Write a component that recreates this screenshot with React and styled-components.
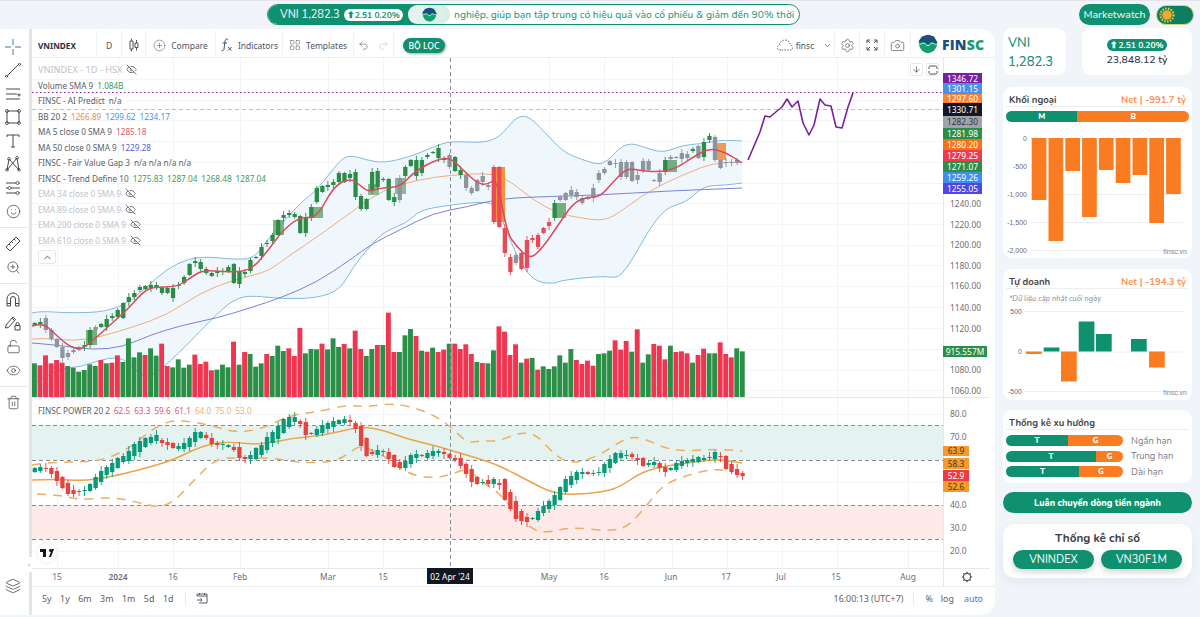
import React from "react";
import styled, { createGlobalStyle } from "styled-components";
import {
  ArrowDown, Camera, ChevronDown, ChevronUp, CirclePlus, Eye, EyeOff, Layers, LayoutGrid,
  LockOpen, Redo2, Settings, Smile, Trash2, Undo2, ZoomIn,
} from "lucide-react";

const GREEN = "#0f9170";
const ORANGE = "#f97b22";
const TV_FONT = `"Noto Sans", "DejaVu Sans", sans-serif`;
const SIDE_FONT = `"Nunito", "Lato", "Noto Sans", sans-serif`;

const GlobalStyle = createGlobalStyle`
  html, body { margin: 0; padding: 0; background: #f1f4f8; }
  body { font-family: ${TV_FONT}; overflow: hidden; }
  * { box-sizing: border-box; }
`;

const Page = styled.div`
  width: 1200px;
  height: 617px;
  display: flex;
  flex-direction: column;
  border-top: 1px solid #e4e6e9;
  background: #f1f4f8;
  overflow: hidden;
`;

/* header */
const Header = styled.header`
  height: 27px;
  flex: none;
  display: grid;
  grid-template-columns: 267px 533px 1fr;
  align-items: start;
  padding-top: 3px;
`;
const TickerPill = styled.div`
  grid-column: 2;
  height: 21px;
  display: flex;
  align-items: center;
  border: 1.5px solid ${GREEN};
  border-radius: 11px;
  background: #fff;
  overflow: hidden;
`;
const TickerHead = styled.div`
  height: 100%;
  width: 152px;
  flex: none;
  display: flex;
  align-items: center;
  gap: 4px;
  padding-left: 12px;
  background: ${GREEN};
  color: #eef;
  font: 500 11px ${SIDE_FONT};
  white-space: nowrap;
`;
const Change = styled.span`
  display: inline-flex;
  align-items: center;
  height: 12px;
  padding: 0 3px;
  border-radius: 6px;
  background: ${(p) => (p.$solid ? GREEN : "#fff")};
  color: ${(p) => (p.$solid ? "#fff" : GREEN)};
  font: 700 8.5px ${SIDE_FONT};
  white-space: nowrap;
`;
const LogoSlot = styled.div`
  width: 42px;
  height: 100%;
  flex: none;
  margin-left: -12px;
  display: flex;
  align-items: center;
  justify-content: center;
  background: linear-gradient(90deg, #e6f4ef, #d6eee6);
  border-radius: 9px;
`;
const Marquee = styled.div`
  padding-left: 4px;
  color: #2f9c85;
  font: 500 10.3px ${SIDE_FONT};
  white-space: nowrap;
`;
const HeaderRight = styled.div`
  grid-column: 3;
  display: flex;
  justify-content: flex-end;
  align-items: center;
  gap: 6px;
  padding-right: 6px;
`;
const Marketwatch = styled.div`
  width: 71px;
  height: 21px;
  display: flex;
  align-items: center;
  justify-content: center;
  border-radius: 11px;
  background: ${GREEN};
  color: #eaf5f1;
  font: 500 10.5px ${SIDE_FONT};
`;
const Toggle = styled.div`
  width: 38px;
  height: 20px;
  display: flex;
  align-items: center;
  padding-left: 2px;
  border: 1.5px solid #d8d27e;
  border-radius: 10px;
  background: #0c7f61;
`;

/* main row */
const Main = styled.main`
  flex: 1;
  min-height: 0;
  display: flex;
`;
const ChartCard = styled.section`
  position: relative;
  width: 995px;
  height: 586px;
  margin-top: 1px;
  flex: none;
  display: flex;
  background: #fff;
  border-radius: 0 14px 14px 0;
  overflow: hidden;
`;
const DrawBar = styled.aside`
  width: 32px;
  flex: none;
  display: flex;
  flex-direction: column;
  align-items: center;
  padding: 6px 3px 10px 0;
  border-right: 3px solid #e2e5ea;
  color: #3f4a52;
`;
const DrawIcon = styled.div`
  width: 29px;
  height: ${(p) => p.$h || 23.5}px;
  flex: none;
  display: flex;
  align-items: center;
  justify-content: center;
`;
const DrawSep = styled.div`
  width: 29px;
  height: 1px;
  flex: none;
  margin: ${(p) => p.$m || "4px 0"};
  background: #e6e8ec;
`;
const DrawGap = styled.div`
  flex: 1;
`;
const SideTab = styled.div`
  position: absolute;
  left: 26px;
  top: 528px;
  width: 6px;
  height: 15px;
  display: flex;
  align-items: center;
  justify-content: center;
  border-radius: 2px 0 0 2px;
  background: #fff;
  color: #a5a8af;
  font-size: 7px;
`;

const ChartCol = styled.div`
  flex: 1;
  min-width: 0;
  display: flex;
  flex-direction: column;
`;
const Toolbar = styled.div`
  height: 29px;
  flex: none;
  display: flex;
  align-items: stretch;
  border-bottom: 1px solid #eceef2;
  color: #50535e;
  font-size: 8.5px;
`;
const ToolCell = styled.div`
  width: ${(p) => p.$w}px;
  flex: none;
  display: flex;
  align-items: center;
  justify-content: ${(p) => (p.$center ? "center" : "flex-start")};
  gap: ${(p) => p.$gap || 5}px;
  padding-left: ${(p) => p.$pl || 0}px;
  padding-top: 4px;
  border-right: ${(p) => (p.$noline ? "none" : "1px solid #eff1f4")};
  margin: 2px 0;
  white-space: nowrap;
`;
const Symbol = styled.b`
  font-weight: 700;
  font-size: 8.2px;
  color: #2d3038;
`;
const ToolSpring = styled.div`
  flex: 1;
`;
const Filter = styled.div`
  width: 42px;
  height: 15px;
  display: flex;
  align-items: center;
  justify-content: center;
  border-radius: 8px;
  background: ${GREEN};
  color: #fff;
  font-size: 8.5px;
  font-weight: 500;
  box-shadow: 1px 1px 3px rgba(0, 0, 0, 0.35);
`;
const Brand = styled.div`
  width: 84px;
  flex: none;
  display: flex;
  align-items: center;
  gap: 4px;
  padding-left: 7px;
  padding-top: 2px;
  font: 800 14px "Open Sans", sans-serif;
  letter-spacing: 0.2px;
`;
const BrandA = styled.span`
  color: #1c4f7c;
`;
const BrandB = styled.span`
  color: #12a06f;
  margin-left: -4px;
`;

const Stage = styled.div`
  position: relative;
  height: 528px;
  flex: none;
`;
const Plot = styled.svg`
  display: block;
`;
const Legend = styled.div`
  position: absolute;
  left: 6px;
  top: 4px;
  display: flex;
  flex-direction: column;
  align-items: flex-start;
  font-size: 8.2px;
  color: #5b5e68;
`;
const LegendRow = styled.div`
  height: 15.5px;
  display: flex;
  align-items: center;
  gap: 4px;
  white-space: nowrap;
  color: ${(p) => (p.$muted ? "#bfc2c9" : "#5b5e68")};
  font-size: ${(p) => (p.$big ? 9.2 : 8.2)}px;
`;
const Val = styled.span`
  color: ${(p) => p.$c};
`;
const Collapse = styled.div`
  width: 18px;
  height: 14px;
  margin-top: 2px;
  display: flex;
  align-items: center;
  justify-content: center;
  border: 1px solid #e6e8ec;
  border-radius: 2px;
  background: #fff;
  color: #50535e;
`;
const PaneLegend = styled.div`
  position: absolute;
  left: 6px;
  top: 345px;
  height: 14px;
  display: flex;
  align-items: center;
  gap: 4px;
  font-size: 8.2px;
  color: #5b5e68;
`;
const PaneButtons = styled.div`
  position: absolute;
  left: 878px;
  top: 5px;
  display: flex;
  gap: 3px;
`;
const PaneButton = styled.div`
  width: 13px;
  height: 13px;
  display: flex;
  align-items: center;
  justify-content: center;
  border: 1px solid #e6e8ec;
  border-radius: 2px;
  background: #fff;
  color: #50535e;
`;
const TvMark = styled.div`
  position: absolute;
  left: 4px;
  top: 484px;
  width: 22px;
  height: 22px;
  display: flex;
  align-items: center;
  justify-content: center;
  border-radius: 50%;
  border: 1px solid #eef0f3;
  background: #fff;
`;
const BottomBar = styled.div`
  flex: 1;
  display: flex;
  align-items: center;
  border-top: 1px solid #eceef2;
  color: #5b5e68;
  font-size: 8.9px;
  padding: 0 12px 6px 10px;
`;
const Range = styled.span`
  margin-right: 8.5px;
  &:nth-child(7) { margin-right: 0; }
`;
const BarSep = styled.div`
  width: 1px;
  height: 13px;
  margin: ${(p) => p.$m};
  background: #e6e8ec;
`;
const Auto = styled.span`
  margin-left: ${(p) => p.$ml || 0}px;
  color: ${(p) => p.$c || "#5b5e68"};
`;

/* side column */
const Side = styled.aside`
  width: 189px;
  margin-left: 8px;
  flex: none;
  display: flex;
  flex-direction: column;
  font-family: ${SIDE_FONT};
`;
const StatRow = styled.div`
  display: flex;
  gap: 16px;
  height: 47px;
`;
const Card = styled.div`
  background: #fff;
  border-radius: ${(p) => p.$r || 9}px;
  margin-top: ${(p) => p.$top || 0}px;
  height: ${(p) => p.$h}px;
  flex: none;
`;
const StatCard = styled(Card)`
  width: ${(p) => p.$w}px;
  display: flex;
  flex-direction: column;
  justify-content: center;
  align-items: ${(p) => (p.$center ? "center" : "flex-start")};
  gap: ${(p) => p.$gap}px;
  padding-left: ${(p) => (p.$center ? 0 : 5)}px;
  padding-top: ${(p) => (p.$center ? 3 : 2)}px;
`;
const VniText = styled.div`
  color: #159178;
  font-size: 13px;
  font-weight: 500;
  line-height: 16px;
`;
const Turnover = styled.div`
  color: #34363d;
  font-size: 10.5px;
  font-weight: 500;
  line-height: 14px;
`;
const CardHead = styled.div`
  height: 20px;
  margin: 0 3px;
  padding: 5px 3px 0;
  display: flex;
  align-items: center;
  justify-content: space-between;
  border-bottom: 1px solid #eceef1;
  font-size: 9.6px;
  font-weight: 700;
  color: #43454e;
`;
const Net = styled.span`
  color: #f6965a;
  font-weight: 700;
`;
const Split = styled.div`
  height: 11px;
  width: ${(p) => p.$w}px;
  margin: ${(p) => p.$mt || 0}px 0 0 3px;
  flex: none;
  display: flex;
  border-radius: 6px;
  overflow: hidden;
  color: #fff;
  font-size: 8px;
  font-weight: 800;
`;
const SplitPart = styled.div`
  display: flex;
  align-items: center;
  justify-content: center;
  background: ${(p) => (p.$orange ? ORANGE : GREEN)};
`;
const SubNote = styled.div`
  height: 17px;
  padding: 4px 0 0 6px;
  color: #8a8d96;
  font-size: 7.5px;
  font-style: italic;
  line-height: 11px;
`;
const BarChart = styled.svg`
  display: block;
  margin-top: ${(p) => p.$mt || 0}px;
`;
const TrendRow = styled.div`
  height: 15.5px;
  display: flex;
  align-items: center;
  gap: 8px;
  color: #7a7c84;
  font-size: 9.4px;
`;
const TrendList = styled.div`
  padding-top: 3px;
  display: flex;
  flex-direction: column;
`;
const WideButton = styled.div`
  height: 21px;
  margin-top: 9px;
  flex: none;
  display: flex;
  align-items: center;
  justify-content: center;
  border-radius: 11px;
  background: ${GREEN};
  color: #fff;
  font-size: 9.1px;
  font-weight: 800;
`;
const IndexCard = styled(Card)`
  display: flex;
  flex-direction: column;
  align-items: center;
  padding-top: 7px;
  box-shadow: 0 4px 12px rgba(40, 50, 70, 0.06);
`;
const IndexTitle = styled.div`
  color: #3a3c48;
  font-size: 11.7px;
  font-weight: 700;
  line-height: 15px;
`;
const IndexButtons = styled.div`
  margin-top: 4px;
  display: flex;
  gap: 7px;
`;
const IndexButton = styled.div`
  width: 81px;
  height: 19px;
  display: flex;
  align-items: center;
  justify-content: center;
  border-radius: 10px;
  background: ${GREEN};
  color: #eaf5f1;
  font-size: 11px;
  font-weight: 500;
  box-shadow: 0 3px 6px rgba(0, 0, 0, 0.18);
`;

/* chart data, in page pixels */
const VOL = `g340 r346 r316 r340 r330 r338 g348 g353 g365 g360 g343 g348 r330 g340 r338 r316 g336 g265 g322 g307 r315 g295 g317 r281 r348 g352 g328 g353 g344 r314 r342 r335 r361 g359 g344 g352 r275 g344 r306 g312 g350 g340 r312 g318 g287 g303 r295 r318 r234 g310 g297 g298 r281 g298 g265 g291 r282 g295 r242 r297 g318 g297 r285 g285 r188 r306 g306 g256 g237 r258 g302 r305 g293 r306 r299 g281 r281 r297 r283 r312 g336 r339 g340 g301 r229 r245 r315 r283 g338 r326 g324 r359 g349 g357 g349 g316 g338 g297 r330 r342 r332 r347 g312 g310 g302 r271 r299 r273 g305 r238 g338 g313 r282 r287 r328 g287 r306 r304 r310 g338 r315 r296 g310 g310 r277 r312 r322 g295 g304`.split(" ");

const CANDLES = `g323,325 g322,324 a318,330 a330,339 a339,347 a347,358 a353,357 a350,352 a347,350 g345,347 g330,345 a327,330 g324,327 g319,327 g316,318 g310,317 g303,318 g297,302 g293,297 g287,290 g286,289 g285,288 g285,287 g288,293 g288,293 g288,298 g285,286 g277,283 g264,275 g261,263 g262,269 g269,273 g273,276 g271,273 g271,272 g267,271 g264,283 g271,284 g272,274 g260,271 g257,258 g247,256 g243,244 g235,241 g220,235 g215,218 g213,215 g214,217 g216,233 g217,233 g207,218 g188,202 g186,192 g185,187 g182,185 g173,182 g173,182 g174,178 g172,197 g196,209 g199,209 g172,190 g171,187 g179,180 g179,200 g197,202 a178,200 g167,176 g160,166 g160,176 g160,173 g155,157 g152,153 g148,158 g159,160 a155,167 g157,171 g170,175 a175,188 a188,193 a180,191 a176,182 a185,187 r167,222 r167,227 r228,253 r257,272 a255,263 r253,269 r240,268 r238,240 r235,247 r228,233 r222,226 g203,218 a197,200 a193,200 a190,195 a192,197 a198,203 a197,199 a188,198 a173,180 a169,173 a161,165 a163,164 a162,177 a162,177 a162,181 a175,180 a161,170 a161,170 a180,181 a173,182 g160,172 a157,159 a157,158 a153,159 a154,158 g149,151 a146,158 g142,157 g136,140 a137,160 a160,168 a162,163 a162,163 a160,163`.split(" ");

const POWER = `g468,472 g467,471 r468,469 r468,474 r471,481 r477,488 r483,494 r490,494 r491,492 g490,491 g484,491 g477,488 g471,482 g467,475 g463,472 g458,468 g456,462 g451,461 g444,456 g441,452 g438,447 g437,443 g435,441 r440,443 r442,445 r443,448 g446,449 g443,449 g438,447 g432,442 g432,438 r435,438 r438,444 r443,445 g444,445 g445,447 r447,450 r447,458 r457,459 g455,459 g448,459 g445,455 g437,450 g432,443 g426,439 g419,433 g417,427 g417,422 r421,424 r422,435 r433,434 g429,435 g425,433 g423,429 g421,427 g420,424 g419,423 r420,422 r423,429 r426,446 r438,456 r452,454 g450,455 g451,452 r452,459 r455,467 r462,468 g461,468 g455,464 g454,458 r455,456 g453,458 g451,456 g451,453 r452,454 r454,458 r458,460 r458,466 r464,474 r469,482 r477,484 g482,483 r480,484 g479,484 r483,485 r479,500 r492,509 r501,519 r511,521 r517,522 g518,519 g511,520 g506,513 g501,509 g495,505 g487,500 g479,492 g476,485 g472,480 g472,474 r472,474 g473,474 g472,473 g464,473 g459,468 g453,463 g453,458 g455,456 r454,457 r458,460 r458,466 g463,465 g462,465 r463,468 r467,472 g468,470 g463,470 g461,466 g460,463 g459,462 g457,462 g458,460 g457,458 g452,459 r456,457 r456,469 r464,472 r469,475 r473,476`.split(" ");

const MA5 = [[32,326],[43,323],[53,332],[67,345],[80,350],[90,343],[110,325],[127,310],[143,292],[153,287],[177,287],[190,278],[203,270],[227,272],[250,271],[267,252],[283,230],[300,217],[317,218],[333,187],[350,178],[360,185],[368,192],[380,188],[400,187],[413,173],[433,161],[450,157],[463,170],[477,183],[487,185],[497,178],[507,233],[517,247],[527,256],[533,257],[543,247],[557,227],[573,203],[587,197],[600,197],[613,182],[627,168],[643,171],[660,172],[677,168],[693,157],[710,148],[727,153],[742,163]];
const BB_UP = [[32,313],[40,311],[67,313],[107,312],[133,300],[157,277],[177,263],[200,256],[240,260],[255,257],[267,240],[300,203],[317,190],[340,160],[350,155],[367,160],[383,163],[410,157],[433,147],[450,141],[483,143],[500,137],[515,118],[527,115],[543,130],[563,152],[583,160],[603,166],[620,147],[632,143],[643,147],[663,153],[683,145],[700,144],[720,140],[742,141]];
const BB_LOW = [[32,385],[48,375],[63,368],[80,367],[100,360],[117,357],[128,362],[140,375],[150,377],[167,365],[213,318],[230,302],[247,295],[283,299],[317,298],[340,290],[353,267],[367,250],[383,232],[407,223],[420,210],[450,205],[477,202],[495,203],[505,227],[517,257],[533,281],[553,284],[563,280],[603,276],[615,278],[622,274],[632,260],[647,233],[665,208],[687,202],[703,186],[727,185],[742,183]];
const BB_MID = [[32,339],[43,338],[73,341],[100,337],[133,327],[167,315],[200,293],[233,280],[267,272],[283,260],[317,237],[350,213],[383,190],[417,180],[450,175],[493,173],[513,183],[533,200],[557,213],[580,218],[605,221],[623,210],[643,195],[667,182],[690,172],[713,163],[742,162]];
const MA50 = [[32,343],[57,345],[93,350],[123,347],[150,335],[183,325],[217,318],[250,308],[283,297],[317,282],[350,260],[373,243],[400,230],[433,213],[467,207],[497,199],[533,197],[600,195],[667,191],[742,188]];
const PREDICT = [[748,160],[760,132],[765,116],[770,117],[777,111],[782,107],[787,99],[792,107],[798,101],[803,123],[809,135],[814,125],[820,99],[825,105],[831,106],[836,127],[842,128],[848,107],[853,93]];
const P_MID = [[32,480],[57,479],[83,481],[110,477],[143,469],[173,460],[193,450],[213,443],[233,442],[260,445],[293,438],[320,436],[350,429],[363,427],[383,430],[407,439],[433,445],[460,453],[483,460],[500,466],[527,480],[550,492],[570,495],[603,492],[620,487],[640,473],[660,467],[687,463],[717,459],[742,463]];
const P_UP = [[32,465],[43,463],[73,462],[100,461],[127,450],[147,433],[167,421],[187,421],[210,425],[233,432],[260,430],[290,415],[317,412],[347,405],[367,407],[393,403],[423,410],[447,423],[467,443],[480,441],[500,441],[520,432],[537,435],[550,450],[565,462],[580,462],[600,455],[627,437],[643,438],[667,449],[687,451],[717,449],[742,451]];
const P_LOW = [[37,494],[60,495],[80,500],[113,497],[140,503],[157,507],[173,503],[197,477],[217,458],[240,458],[273,458],[300,463],[333,462],[350,453],[360,445],[383,455],[410,475],[433,478],[450,475],[467,468],[483,483],[500,493],[523,523],[543,534],[570,527],[607,531],[627,528],[647,505],[663,485],[687,475],[713,469],[730,471]];

const smooth = (pts) => {
  let d = `M${pts[0][0]} ${pts[0][1]}`;
  for (let i = 1; i < pts.length - 1; i++) {
    const mx = (pts[i][0] + pts[i + 1][0]) / 2;
    const my = (pts[i][1] + pts[i + 1][1]) / 2;
    d += ` Q${pts[i][0]} ${pts[i][1]} ${mx} ${my}`;
  }
  const last = pts[pts.length - 1];
  return `${d} L${last[0]} ${last[1]}`;
};
const line = (pts) => pts.map((p) => p.join(",")).join(" ");
const candleX = (i) => 34.75 + 5.53 * i;

const PRICE_TAGS = [
  ["1346.72", 73, 11, "#7b1fa2"], ["1301.15", 83, 11, "#4a92e6"], ["1297.60", 94, 10, "#f58533"],
  ["1330.71", 103, 13, "#131722"], ["1282.30", 116, 12, "#a0a3aa", "#34363d"], ["1281.98", 128, 11, "#2b8f47"],
  ["1280.20", 139, 11, "#f97316"], ["1279.25", 150, 11, "#ef3a50"], ["1271.07", 161, 11, "#2b8f47"],
  ["1259.26", 172, 11, "#3b8fef"], ["1255.05", 183, 11, "#4f46e5"],
];
const PRICE_TICKS = [[1240, 203.5], [1220, 224.5], [1200, 245], [1180, 265.5], [1160, 286], [1140, 307.5], [1120, 328.5], [1080, 370], [1060, 390.5]];
const POWER_TICKS = [["80.0", 414], ["70.0", 436.5], ["40.0", 505], ["30.0", 528], ["20.0", 551]];
const POWER_TAGS = [["63.9", 446, 10, "#f59a2c", "#4a3a1a"], ["58.3", 458, 11, "#f59a2c", "#4a3a1a"], ["52.9", 470, 11, "#ef3a41", "#fff"], ["52.6", 481, 11, "#f59a2c", "#4a3a1a"]];
const V_GRID = [57, 118, 173, 240, 328, 383, 549, 604, 672, 727, 782, 837, 908];
const H_GRID = [79, 100, 120, 141, 162, 183, 203, 224, 245, 265, 286, 307, 328, 349, 370, 390];
const TIME_TICKS = [["15", 57], ["2024", 118, 600], ["16", 173], ["Feb", 240], ["Mar", 328], ["15", 383], ["May", 549], ["16", 604], ["Jun", 671], ["17", 726], ["Jul", 781], ["15", 836], ["Aug", 908]];

const Candles = ({ data, palette, wick }) =>
  data.map((c, i) => {
    const [top, bottom] = c.slice(1).split(",").map(Number);
    const x = candleX(i);
    const fill = palette[c[0]];
    const up = 1 + (i * 7) % wick;
    const down = 1 + (i * 11) % wick;
    return (
      <g key={i} fill={fill}>
        <rect x={x - 0.4} y={top - up} width="0.9" height={bottom - top + up + down} />
        <rect x={x - 2.1} y={top} width="4.3" height={Math.max(bottom - top, 1)} />
      </g>
    );
  });

const ChartPlot = () => (
  <Plot width="963" height="528" viewBox="32 58 963 528" fontFamily={TV_FONT}>
    {V_GRID.map((x) => <line key={x} x1={x + 0.5} x2={x + 0.5} y1="58" y2="568" stroke="#f2f4f8" />)}
    {H_GRID.map((y) => <line key={y} x1="32" x2="943" y1={y + 0.5} y2={y + 0.5} stroke="#f2f4f8" />)}
    {[414, 436, 482, 528, 551].map((y) => <line key={y} x1="32" x2="943" y1={y + 0.5} y2={y + 0.5} stroke="#f2f4f8" />)}

    {/* main pane */}
    <path d={`${smooth(BB_UP)} L742 183 ${smooth([...BB_LOW].reverse()).replace("M", "L")} Z`} fill="#eff7fc" />
    <path d={smooth(BB_UP)} fill="none" stroke="#86b8de" strokeWidth="1" />
    <path d={smooth(BB_LOW)} fill="none" stroke="#86b8de" strokeWidth="1" />
    <path d={smooth(BB_MID)} fill="none" stroke="#f3ab7c" strokeWidth="1" />
    <path d={smooth(MA50)} fill="none" stroke="#7c7fd6" strokeWidth="1" />
    <line x1="32" x2="943" y1="92.5" y2="92.5" stroke="#7b1fa2" strokeWidth="1.2" strokeDasharray="1.5 2.5" />
    <line x1="32" x2="943" y1="109.5" y2="109.5" stroke="#bdbfc6" strokeDasharray="4 3" />

    <rect x="86" y="330" width="11" height="15" fill="#5ea368" opacity="0.85" />
    <rect x="273" y="220" width="11" height="15" fill="#5ea368" opacity="0.8" />
    <rect x="312" y="207" width="11" height="11" fill="#5ea368" opacity="0.8" />
    <rect x="368" y="184" width="11" height="11" fill="#5ea368" opacity="0.7" />
    <rect x="395" y="178" width="11" height="16" fill="#5ea368" opacity="0.7" />
    <rect x="494" y="167" width="11" height="55" fill="#f5913c" />
    <rect x="555" y="203" width="11" height="15" fill="#5ea368" opacity="0.85" />
    <rect x="666" y="160" width="11" height="12" fill="#5ea368" opacity="0.85" />
    <rect x="715" y="143" width="11" height="17" fill="#f19a55" />
    <Candles data={CANDLES} palette={{ g: "#2b8d45", r: "#e94b55", a: "#8f959f" }} wick={4} />
    <path d={smooth(MA5)} fill="none" stroke="#db4a5c" strokeWidth="1.5" />
    <polyline points={line(PREDICT)} fill="none" stroke="#7b1fa2" strokeWidth="1.6" strokeLinejoin="round" />

    {/* volume */}
    {VOL.map((v, i) => {
      const top = 250 + Number(v.slice(1)) / 3;
      return <rect key={i} x={32 + 5.53 * i} y={top} width="4.9" height={397 - top} fill={v[0] === "g" ? "#2b8f47" : "#ef3550"} />;
    })}
    <line x1="32" x2="990" y1="397.5" y2="397.5" stroke="#e6e8ec" />

    {/* power pane */}
    <rect x="32" y="425" width="911" height="35" fill="#e5f3f0" />
    <rect x="32" y="505" width="911" height="34" fill="#fde9e8" />
    {[425, 460, 505, 539].map((y) => <line key={y} x1="32" x2="943" y1={y + 0.5} y2={y + 0.5} stroke="#8b8d95" strokeDasharray="4 3" />)}
    <path d={smooth(P_UP)} fill="none" stroke="#eeae62" strokeWidth="1.5" strokeDasharray="9 7" />
    <path d={smooth(P_LOW)} fill="none" stroke="#eeae62" strokeWidth="1.5" strokeDasharray="9 7" />
    <path d={smooth(P_MID)} fill="none" stroke="#eba449" strokeWidth="1.5" />
    <Candles data={POWER} palette={{ g: "#089a78", r: "#e8423e" }} wick={5} />

    <line x1="450.5" x2="450.5" y1="58" y2="568" stroke="#8b8d95" strokeDasharray="4 3" />

    {/* axes */}
    <line x1="943.5" x2="943.5" y1="58" y2="586" stroke="#e6e8ec" />
    <line x1="32" x2="990" y1="568.5" y2="568.5" stroke="#e6e8ec" />
    <g fontSize="8.4" fill="#6a6d76">
      {PRICE_TICKS.map(([t, y]) => <text key={t} x="950" y={y + 3}>{t}.00</text>)}
      {POWER_TICKS.map(([t, y]) => <text key={t} x="950" y={y + 3}>{t}</text>)}
      {TIME_TICKS.map(([t, x, w], i) => <text key={i} x={x} y="580" textAnchor="middle" fontWeight={w || 400}>{t}</text>)}
    </g>
    <g fontSize="8.4" textAnchor="middle">
      {PRICE_TAGS.map(([t, y, h, bg, fg]) => (
        <g key={t}>
          <rect x="943" y={y} width="39" height={h} fill={bg} />
          <text x="962.5" y={y + h / 2 + 3} fill={fg || "#fff"}>{t}</text>
        </g>
      ))}
      <rect x="943" y="346" width="44" height="11" fill="#2b8f47" />
      <text x="965" y="354.5" fill="#fff">915.557M</text>
      {POWER_TAGS.map(([t, y, h, bg, fg]) => (
        <g key={t}>
          <rect x="943" y={y} width="26" height={h} fill={bg} />
          <text x="956" y={y + h / 2 + 3} fill={fg}>{t}</text>
        </g>
      ))}
      <rect x="427" y="568" width="46" height="16" fill="#131722" />
      <text x="450" y="579.5" fill="#fff">02 Apr '24</text>
    </g>
    <g transform="translate(961 571)" stroke="#50535e" fill="none">
      <circle cx="6" cy="6" r="3.6" strokeWidth="1.2" />
      <path d="M6 .8v1.6M6 9.6v1.6M.8 6h1.6M9.6 6h1.6M2.3 2.3l1.1 1.1M8.6 8.6l1.1 1.1M9.7 2.3L8.6 3.4M3.4 8.6L2.3 9.7" strokeWidth="1.2" />
    </g>
  </Plot>
);

const ChartLegend = () => (
  <Legend>
    <LegendRow $muted $big>VNINDEX - 1D - HSX <EyeOff size={11} color="#6a6d76" /></LegendRow>
    <LegendRow>Volume SMA 9 <Val $c="#3f9a58">1.084B</Val></LegendRow>
    <LegendRow>FINSC - AI Predict <Val $c="#5b5e68">n/a</Val></LegendRow>
    <LegendRow>BB 20 2 <Val $c="#ef8a50">1266.89</Val><Val $c="#4a92e6">1299.62</Val><Val $c="#4a92e6">1234.17</Val></LegendRow>
    <LegendRow>MA 5 close 0 SMA 9 <Val $c="#e0576a">1285.18</Val></LegendRow>
    <LegendRow>MA 50 close 0 SMA 9 <Val $c="#5a5fcf">1229.28</Val></LegendRow>
    <LegendRow>FINSC - Fair Value Gap 3 <Val $c="#5b5e68">n/a n/a n/a n/a</Val></LegendRow>
    <LegendRow>FINSC - Trend Define 10 <Val $c="#3f9a58">1275.83</Val><Val $c="#3f9a58">1287.04</Val><Val $c="#3f9a58">1268.48</Val><Val $c="#3f9a58">1287.04</Val></LegendRow>
    {["EMA 34", "EMA 89", "EMA 200", "EMA 610"].map((n) => (
      <LegendRow $muted key={n}>{n} close 0 SMA 9 <EyeOff size={11} color="#6a6d76" /></LegendRow>
    ))}
    <Collapse><ChevronUp size={11} /></Collapse>
  </Legend>
);

const Tool = ({ d, children }) => (
  <DrawIcon>
    {children || (
      <svg width="18" height="18" viewBox="0 0 18 18" fill="none" stroke="currentColor" strokeWidth="1">
        <path d={d} />
      </svg>
    )}
  </DrawIcon>
);

const DrawTools = () => (
  <DrawBar>
    <DrawIcon>
      <svg width="18" height="18" viewBox="0 0 18 18" fill="none" stroke="#4b78a0" strokeWidth="1">
        <path d="M1 9h6M11 9h6M9 1v6M9 11v6" />
      </svg>
    </DrawIcon>
    <Tool d="M3 15L15 3M15.5 2.500a1 1 0 1 0 .01 0M2.500 14.500a1 1 0 1 0 .01 0" />
    <Tool d="M2 4h14M2 9h11M2 14h14M15 9a1 1 0 1 0 .01 0" />
    <Tool d="M3 3h12v12H3zM3 1.500a1.500 1.500 0 1 0 .01 0M15 1.500a1.500 1.500 0 1 0 .01 0M3 13.500a1.500 1.500 0 1 0 .01 0M15 13.500a1.500 1.500 0 1 0 .01 0" />
    <Tool d="M3 5V3h12v2M9 3v12M7 15h4" />
    <Tool d="M3 15L5 4l10 11L13 3 3 15M5 2.500a1.300 1.300 0 1 0 .01 0M13 1.500a1.300 1.300 0 1 0 .01 0M3 13.500a1.300 1.300 0 1 0 .01 0M15 13.500a1.300 1.300 0 1 0 .01 0" />
    <Tool d="M2 4h10M15 4h1M2 9h2M7 9h9M2 14h10M15 14h1M13.500 2.500a1.500 1.500 0 1 0 .01 0M5.500 7.500a1.500 1.500 0 1 0 .01 0M13.500 12.500a1.500 1.500 0 1 0 .01 0" />
    <DrawIcon><Smile size={15} strokeWidth={1.2} /></DrawIcon>
    <DrawSep />
    <Tool d="M2 12L12 2l4 4L6 16zM5 9l1.500 1.500M7.500 6.500L9 8M10 4l1.500 1.500" />
    <DrawIcon><ZoomIn size={15} strokeWidth={1.2} /></DrawIcon>
    <DrawSep />
    <Tool d="M3 15V8a6 6 0 0 1 12 0v7h-3.500V8a2.500 2.500 0 0 0-5 0v7zM3 12.500h3.500M11.500 12.500H15" />
    <Tool d="M2 11L9 3l2.500 2.500-7 8L1.500 14zM8 4l2.500 2.500M11 11.500h5V16h-5zM12 11.500V10a1.500 1.500 0 0 1 3 0v1.500" />
    <DrawIcon><LockOpen size={15} strokeWidth={1.2} /></DrawIcon>
    <DrawIcon><Eye size={15} strokeWidth={1.2} /></DrawIcon>
    <DrawSep />
    <DrawIcon><Trash2 size={15} strokeWidth={1.2} /></DrawIcon>
    <DrawGap />
    <DrawIcon $h={38}><Layers size={16} strokeWidth={1.2} /></DrawIcon>
  </DrawBar>
);

const CandleIcon = () => (
  <svg width="10" height="14" viewBox="0 0 10 14" fill="none" stroke="currentColor" strokeWidth="1">
    <path d="M2.500 0.500v2M2.500 11v2.500M7.500 2v3M7.500 9.500v3M1 3h3v8H1zM6 5h3v4.500H6z" />
  </svg>
);
const FxIcon = () => (
  <svg width="13" height="14" viewBox="0 0 13 14" fill="none" stroke="currentColor" strokeWidth="1">
    <path d="M8 1.200c-2-.6-2.800.6-3 2L4 11c-.3 1.500-1 2-2.500 1.600M2.500 5H7M8 9l3.500 3.500M11.500 9L8 12.500" />
  </svg>
);
const FullscreenIcon = () => (
  <svg width="12" height="12" viewBox="0 0 12 12" fill="none" stroke="currentColor" strokeWidth="1">
    <path d="M1 4V1h3M1 1l3 3M8 1h3v3M11 1L8 4M1 8v3h3M1 11l3-3M11 8v3H8M11 11L8 8" />
  </svg>
);
const CloudIcon = () => (
  <svg width="16" height="12" viewBox="0 0 16 12" fill="none" stroke="#6a6d76" strokeWidth="1" strokeDasharray="1.600 1.200">
    <path d="M4 11H3a2.500 2.500 0 0 1-.5-5C3 3 5 1 8 1s5 2 5.500 5a2.500 2.500 0 0 1-.5 5z" />
  </svg>
);
const FinscMark = ({ size }) => (
  <svg width={size} height={size} viewBox="0 0 24 24">
    <path d="M12 1l7 2 4 7c.4 6-4 13-11 13S.6 16 1 10l4-7z" fill="#12a06f" />
    <path d="M5 3l7-2 7 2 4 7-1 2c-2.400 1-3.500-2.500-6-2.500s-2.500 3-4 3-2.500-3-5-3-4 1.500-5.500.5l-.5-2z" fill="#1c4f7c" />
    <path d="M1.500 12c2 1 3.500-1 5.500-1s2.500 3 5 3 3-3 5-3 3 2 5.500 1" stroke="#fff" strokeWidth="1" fill="none" />
  </svg>
);

const ChartTools = () => (
  <Toolbar>
    <ToolCell $w={65} $pl={6}><Symbol>VNINDEX</Symbol></ToolCell>
    <ToolCell $w={25} $center>D</ToolCell>
    <ToolCell $w={24} $center><CandleIcon /></ToolCell>
    <ToolCell $w={70} $center><CirclePlus size={13} strokeWidth={1} />Compare</ToolCell>
    <ToolCell $w={67} $center><FxIcon />Indicators</ToolCell>
    <ToolCell $w={71} $center><LayoutGrid size={12} strokeWidth={1} />Templates</ToolCell>
    <ToolCell $w={40} $center $gap={9}>
      <Undo2 size={11} strokeWidth={1.2} />
      <Redo2 size={11} strokeWidth={1.2} color="#c4c7cd" />
    </ToolCell>
    <ToolCell $w={60} $center $noline><Filter>BỘ LỌC</Filter></ToolCell>
    <ToolSpring />
    <ToolCell $w={60} $center $gap={3}>
      <CloudIcon />finsc<ChevronDown size={9} style={{ marginLeft: 6 }} />
    </ToolCell>
    <ToolCell $w={25} $center><Settings size={15} strokeWidth={1.1} /></ToolCell>
    <ToolCell $w={25} $center><FullscreenIcon /></ToolCell>
    <ToolCell $w={26} $center><Camera size={15} strokeWidth={1.1} /></ToolCell>
    <Brand>
      <FinscMark size={20} />
      <BrandA>FIN</BrandA><BrandB>SC</BrandB>
    </Brand>
  </Toolbar>
);

const BAR_TOP = 138;
const FOREIGN = [200, 241, 171, 217, 170, 183, 175, 223, 194];
const ForeignChart = () => (
  <BarChart $mt={7} width="189" height="129" viewBox="0 0 189 129" fontFamily="Liberation Sans, Arial, sans-serif">
    {[0, 28, 56, 84, 112].map((y) => <line key={y} x1="28" x2="180" y1={y + 9.5} y2={y + 9.5} stroke="#eceef1" />)}
    {["0", "-500", "-1,000", "-1,500", "-2,000"].map((t, i) => (
      <text key={t} x="24" y={12 + i * 28} textAnchor="end" fontSize="7" fill="#6a6d76">{t}</text>
    ))}
    {FOREIGN.map((b, i) => <rect key={i} x={28.700 + 16.800 * i} y="9" width="14.700" height={b - BAR_TOP} fill={ORANGE} />)}
    <text x="184" y="125" textAnchor="end" fontSize="7" fill="#85878f">finsc.vn</text>
  </BarChart>
);
const DEALER = [[23, 351, 353.5, ORANGE], [40.700, 347, 351, GREEN], [58, 351, 381, ORANGE], [75.700, 321, 351, GREEN], [93, 333.500, 351, GREEN], [128, 338.500, 351, GREEN], [146, 351, 367, ORANGE]];
const DealerChart = () => (
  <BarChart width="189" height="93" viewBox="0 0 189 93" fontFamily="Liberation Sans, Arial, sans-serif">
    {[5, 45.500, 85].map((y) => <line key={y} x1="22" x2="180" y1={y + 0.5} y2={y + 0.5} stroke="#eceef1" />)}
    {[["500", 8], ["0", 48], ["-500", 88]].map(([t, y]) => (
      <text key={t} x="19" y={y} textAnchor="end" fontSize="7" fill="#6a6d76">{t}</text>
    ))}
    {DEALER.map(([x, a, b, c], i) => <rect key={i} x={x} y={a - 305.500} width="15.700" height={b - a} fill={c} />)}
    <text x="184" y="89" textAnchor="end" fontSize="7" fill="#85878f">finsc.vn</text>
  </BarChart>
);

const TREND = [["Ngắn hạn", 62], ["Trung hạn", 90], ["Dài hạn", 73]];

const App = () => (
  <Page>
    <GlobalStyle />
    <Header>
      <TickerPill>
        <TickerHead>VNI 1,282.3 <Change>⬆2.51 0.20%</Change></TickerHead>
        <LogoSlot><FinscMark size={15} /></LogoSlot>
        <Marquee>nghiệp, giúp bạn tập trung có hiệu quả vào cổ phiếu &amp; giảm đến 90% thời</Marquee>
      </TickerPill>
      <HeaderRight>
        <Marketwatch>Marketwatch</Marketwatch>
        <Toggle>
          <svg width="16" height="16" viewBox="0 0 16 16">
            <circle cx="8" cy="8" r="4.800" fill="#f2a92e" />
            <circle cx="8" cy="8" r="6.500" fill="none" stroke="#efc13d" strokeWidth="2.200" strokeDasharray="1.600 1.200" />
          </svg>
        </Toggle>
      </HeaderRight>
    </Header>
    <Main>
      <ChartCard>
        <DrawTools />
        <SideTab>‹</SideTab>
        <ChartCol>
          <ChartTools />
          <Stage>
            <ChartPlot />
            <ChartLegend />
            <PaneLegend>
              FINSC POWER 20 2 <Val $c="#e0576a">62.5</Val><Val $c="#e0576a">63.3</Val><Val $c="#e0576a">59.6</Val><Val $c="#e0576a">61.1</Val>
              <Val $c="#efb36f">64.0</Val><Val $c="#efb36f">75.0</Val><Val $c="#efb36f">53.0</Val>
            </PaneLegend>
            <PaneButtons>
              <PaneButton><ArrowDown size={9} /></PaneButton>
              <PaneButton>
                <svg width="10" height="10" viewBox="0 0 10 10" fill="none" stroke="currentColor">
                  <path d="M1 4V2.500A1.500 1.500 0 0 1 2.500 1h5A1.500 1.500 0 0 1 9 2.500V4M1 6v1.500A1.500 1.500 0 0 0 2.500 9h5A1.500 1.500 0 0 0 9 7.500V6" />
                </svg>
              </PaneButton>
            </PaneButtons>
            <TvMark>
              <svg width="14" height="8" viewBox="0 0 14 8" fill="#131722">
                <path d="M0 0h6v8H3V3H0zM10.500 0a1.500 1.500 0 1 1-.01 0zM9 8l3-8h2l-3 8z" />
              </svg>
            </TvMark>
          </Stage>
          <BottomBar>
            <Range>5y</Range><Range>1y</Range><Range>6m</Range><Range>3m</Range><Range>1m</Range><Range>5d</Range><Range>1d</Range>
            <BarSep $m="0 10px 0 12px" />
            <svg width="12" height="12" viewBox="0 0 12 12" fill="none" stroke="currentColor">
              <path d="M1 4V2h10v9H3M1 4h10M3.500 1v2M8.500 1v2M1 8h5M4.500 6.500L6 8 4.500 9.500" />
            </svg>
            <ToolSpring />
            16:00:13 (UTC+7)
            <BarSep $m="0 11px 0 10px" />
            <Auto>%</Auto><Auto $ml={8}>log</Auto><Auto $ml={10} $c="#5b6bd8">auto</Auto>
          </BottomBar>
        </ChartCol>
      </ChartCard>

      <Side>
        <StatRow>
          <StatCard $w={63} $h={47} $gap={3}>
            <VniText>VNI</VniText>
            <VniText>1,282.3</VniText>
          </StatCard>
          <StatCard $w={110} $h={47} $gap={2} $center>
            <Change $solid>⬆2.51 0.20%</Change>
            <Turnover>23,848.12 tỷ</Turnover>
          </StatCard>
        </StatRow>

        <Card $top={12} $h={171}>
          <CardHead>Khối ngoại <Net>Net | -991.7 tỷ</Net></CardHead>
          <Split $w={183} $mt={4}>
            <SplitPart style={{ width: "39%" }}>M</SplitPart>
            <SplitPart $orange style={{ width: "61%" }}>B</SplitPart>
          </Split>
          <ForeignChart />
        </Card>

        <Card $top={11} $h={131}>
          <CardHead>Tự doanh <Net>Net | -194.3 tỷ</Net></CardHead>
          <SubNote>*Dữ liệu cập nhật cuối ngày</SubNote>
          <DealerChart />
        </Card>

        <Card $top={10} $h={73}>
          <CardHead>Thống kê xu hướng</CardHead>
          <TrendList>
            {TREND.map(([label, t]) => (
              <TrendRow key={label}>
                <Split $w={117}>
                  <SplitPart style={{ width: t }}>T</SplitPart>
                  <SplitPart $orange style={{ width: 117 - t }}>G</SplitPart>
                </Split>
                {label}
              </TrendRow>
            ))}
          </TrendList>
        </Card>

        <WideButton>Luân chuyển dòng tiền ngành</WideButton>

        <IndexCard $top={11} $h={54} $r={12}>
          <IndexTitle>Thống kê chỉ số</IndexTitle>
          <IndexButtons>
            <IndexButton>VNINDEX</IndexButton>
            <IndexButton>VN30F1M</IndexButton>
          </IndexButtons>
        </IndexCard>
      </Side>
    </Main>
  </Page>
);

export default App;
